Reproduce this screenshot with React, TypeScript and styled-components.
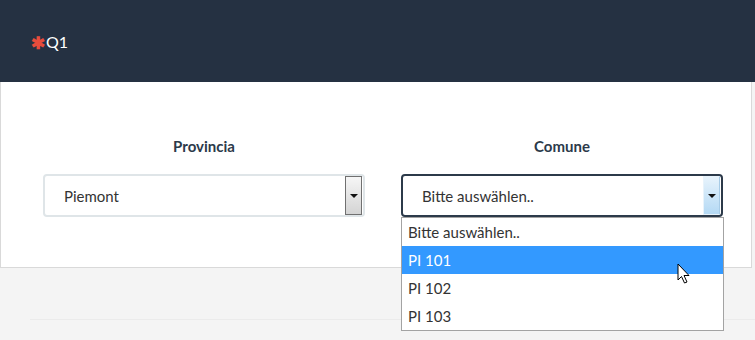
import styled, { createGlobalStyle } from "styled-components";

const GlobalStyle = createGlobalStyle`
    html, body {
        margin: 0;
        padding: 0;
        background: #f4f4f4;
        font-family: Lato, "Open Sans", sans-serif;
    }
`;

const Page = styled.div`
    width: 755px;
    height: 340px;
    position: relative;
    overflow: hidden;
    background: #f4f4f4;
`;

const Header = styled.div`
    height: 82px;
    background: #253142;
    display: flex;
    align-items: center;
    padding-left: 31px;
    color: #fff;
    font-size: 16px;
`;

const Required = styled.span`
    color: #e74c3c;
    font-size: 17px;
    font-weight: 900;
    margin-right: 1px;
    line-height: 1;
    position: relative;
    top: 1px;
`;

const Card = styled.div`
    width: 752px;
    height: 186px;
    box-sizing: border-box;
    background: #fff;
    border: 1px solid #d9d9d9;
    border-top: none;
    display: grid;
    grid-template-columns: 1fr 1fr;
    padding: 0 10px 0 24px;
`;

const Column = styled.div`
    padding: 54px 18px 0;
    display: flex;
    flex-direction: column;
    align-items: stretch;
`;

const Label = styled.div`
    text-align: center;
    font-weight: 700;
    font-size: 15px;
    color: #2c3a4a;
    height: 20px;
    line-height: 21px;
    margin-bottom: 18px;
`;

const SelectBox = styled.div<{ $focused?: boolean }>`
    position: relative;
    height: 43px;
    box-sizing: border-box;
    border: 2px solid ${(p) => (p.$focused ? "#2c3a4a" : "#dfe5e8")};
    border-radius: 4px;
    display: flex;
    align-items: center;
    padding-left: 19px;
    font-size: 15px;
    color: #333;
    background: #fff;
`;

const ArrowButton = styled.div<{ $focused?: boolean }>`
    margin-left: auto;
    width: 17px;
    align-self: stretch;
    box-sizing: border-box;
    border: 1px solid ${(p) => (p.$focused ? "#e8f3fb" : "#707070")};
    border-right-color: ${(p) => (p.$focused ? "#a7cbe6" : "#707070")};
    background: ${(p) =>
        p.$focused
            ? "linear-gradient(#e7f3fc, #b4d9f4)"
            : "linear-gradient(#f6f6f6, #d4d4d4)"};
    display: flex;
    align-items: center;
    justify-content: center;
    margin-right: 1px;

    &::after {
        content: "";
        border-left: 4px solid transparent;
        border-right: 4px solid transparent;
        border-top: 4px solid #111;
    }
`;

const OptionList = styled.div`
    position: absolute;
    top: 41px;
    left: -2px;
    width: 323px;
    box-sizing: border-box;
    border: 1px solid #a3a3a3;
    background: #fff;
    z-index: 2;
`;

const Option = styled.div<{ $active?: boolean }>`
    height: 28px;
    line-height: 28px;
    padding-left: 6px;
    font-size: 15px;
    color: ${(p) => (p.$active ? "#fff" : "#333")};
    background: ${(p) => (p.$active ? "#3399ff" : "transparent")};
`;

const Divider = styled.div`
    margin: 51px 0 0 30px;
    border-top: 1px solid #ebebeb;
`;

const Cursor = styled.svg`
    position: absolute;
    left: 677px;
    top: 263px;
    z-index: 5;
`;

const App = () => {
    const options = ["Bitte auswählen..", "PI 101", "PI 102", "PI 103"];

    return (
        <Page>
            <GlobalStyle />
            <Header>
                <Required>✱</Required>
                Q1
            </Header>
            <Card>
                <Column>
                    <Label>Provincia</Label>
                    <SelectBox>
                        Piemont
                        <ArrowButton />
                    </SelectBox>
                </Column>
                <Column>
                    <Label>Comune</Label>
                    <SelectBox $focused>
                        Bitte auswählen..
                        <ArrowButton $focused />
                        <OptionList>
                            {options.map((o) => (
                                <Option key={o} $active={o === "PI 101"}>
                                    {o}
                                </Option>
                            ))}
                        </OptionList>
                    </SelectBox>
                </Column>
            </Card>
            <Divider />
            <Cursor width="14" height="22" viewBox="0 0 14 22">
                <path
                    d="M1 1 L1 17 L4.5 13.5 L7.5 20 L10 19 L7 12.5 L12 12.5 Z"
                    fill="#fff"
                    stroke="#000"
                    strokeWidth="1"
                    strokeLinejoin="round"
                />
            </Cursor>
        </Page>
    );
};

export default App;
